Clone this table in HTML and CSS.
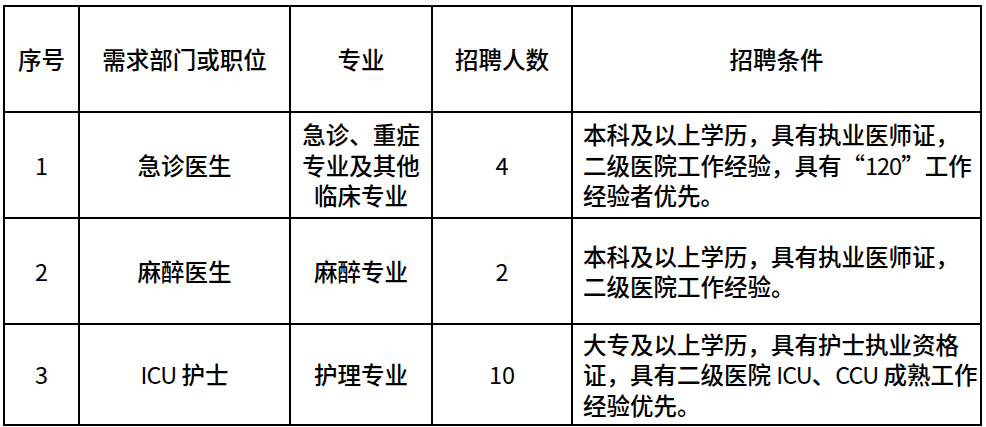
FILE: index.html
```html
<!DOCTYPE html>
<html lang="zh-CN">
<head>
<meta charset="utf-8">
<title>招聘岗位</title>
<link rel="stylesheet" href="styles.css">
</head>
<body>
<table class="recruit">
  <tr class="row head">
    <td class="c1">序号</td>
    <td class="c2">需求部门或职位</td>
    <td class="c3">专业</td>
    <td class="c4">招聘人数</td>
    <td class="c5 center">招聘条件</td>
  </tr>
  <tr class="row">
    <td class="c1 num">1</td>
    <td class="c2">急诊医生</td>
    <td class="c3">急诊、重症<br>专业及其他<br>临床专业</td>
    <td class="c4 num">4</td>
    <td class="c5">本科及以上学历，具有执业医师证，<br>二级医院工作经验，具有“<span class="lat">120</span>”工作<br>经验者优先。</td>
  </tr>
  <tr class="row">
    <td class="c1 num">2</td>
    <td class="c2">麻醉医生</td>
    <td class="c3">麻醉专业</td>
    <td class="c4 num">2</td>
    <td class="c5">本科及以上学历，具有执业医师证，<br>二级医院工作经验。</td>
  </tr>
  <tr class="row last">
    <td class="c1 num">3</td>
    <td class="c2"><span class="lat">ICU</span> 护士</td>
    <td class="c3">护理专业</td>
    <td class="c4 num">10</td>
    <td class="c5">大专及以上学历，具有护士执业资格<br>证，具有二级医院 <span class="lat">ICU</span>、<span class="lat">CCU</span> 成熟工作<br>经验优先。</td>
  </tr>
</table>
</body>
</html>
```
FILE: styles.css
```css
html, body {
  margin: 0;
  padding: 0;
  background: #fff;
}
body {
  padding: 5px 0 0 3px;
  font-family: "Noto Sans CJK SC", "Noto Sans", sans-serif;
  font-weight: 500;
  font-size: 23.5px;
  line-height: 30.5px;
  color: #000;
}
.recruit {
  border-collapse: separate;
  border-spacing: 0;
  table-layout: fixed;
  border-top: 2px solid #000;
  border-left: 2px solid #000;
}
.recruit td {
  box-sizing: border-box;
  border-right: 2px solid #000;
  border-bottom: 2px solid #000;
  height: 106px;
  padding: 0;
  text-align: center;
  vertical-align: middle;
  white-space: nowrap;
}
.recruit .last td {
  height: 101px;
}
.recruit .num {
  font-weight: 400;
}
.lat {
  font-weight: 400;
  letter-spacing: -1px;
}
.c1 { width: 75px; }
.c2 { width: 211px; }
.c3 { width: 142px; }
.c4 { width: 140px; }
.recruit .c5 {
  width: 409px;
  text-align: left;
  padding-left: 10px;
}
.recruit .c5.center {
  text-align: center;
  padding-left: 0;
}
```
